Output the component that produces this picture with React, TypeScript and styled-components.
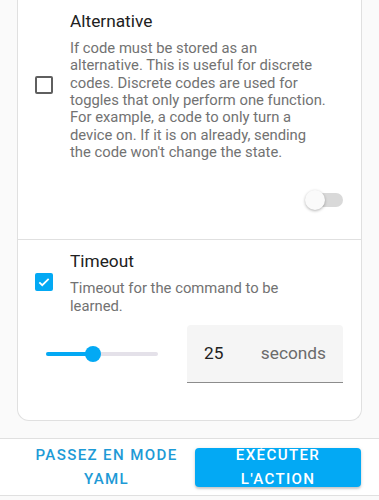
import styled, { createGlobalStyle } from 'styled-components';

const GlobalStyle = createGlobalStyle`
  html, body {
    margin: 0;
    padding: 0;
    background: #fafafa;
    font-family: Roboto, "Noto Sans", "Liberation Sans", sans-serif;
  }
`;

const Page = styled.div`
  width: 379px;
  height: 500px;
  display: flex;
  flex-direction: column;
  overflow: hidden;
`;

const Card = styled.div`
  margin: 0 17px;
  background: #fff;
  border: 1px solid #e0e0e0;
  border-top: none;
  border-radius: 0 0 12px 12px;
`;

const Section = styled.div<{ $last?: boolean }>`
  padding: 9px 18px ${(p) => (p.$last ? '37px' : '29px')} 17px;
  border-bottom: ${(p) => (p.$last ? 'none' : '1px solid #e0e0e0')};
`;

const Row = styled.div`
  display: flex;
  align-items: center;
  gap: 17px;
`;

const Box = styled.div<{ $checked?: boolean }>`
  flex: 0 0 auto;
  width: 18px;
  height: 18px;
  box-sizing: border-box;
  border-radius: 2px;
  border: 2px solid ${(p) => (p.$checked ? '#03a9f4' : '#5f5f5f')};
  background: ${(p) => (p.$checked ? '#03a9f4' : 'transparent')};
  display: flex;
  align-items: center;
  justify-content: center;
`;

const Text = styled.div`
  display: flex;
  flex-direction: column;
  gap: 7px;
  width: 260px;
`;

const Title = styled.div`
  font-size: 17.3px;
  line-height: 24px;
  color: #212121;
`;

const Desc = styled.div`
  font-size: 14.8px;
  line-height: 17.33px;
  color: #727272;
`;

const ToggleRow = styled.div`
  display: flex;
  justify-content: flex-end;
  margin-top: 29px;
  height: 20px;
`;

const Toggle = styled.div`
  position: relative;
  width: 38px;
  height: 20px;
  display: flex;
  align-items: center;
  justify-content: flex-end;
`;

const Track = styled.div`
  width: 34px;
  height: 14px;
  border-radius: 7px;
  background: #d9d9d9;
`;

const Thumb = styled.div`
  position: absolute;
  left: 0;
  top: 0;
  width: 20px;
  height: 20px;
  border-radius: 50%;
  background: #fafafa;
  box-shadow: 0 1px 3px rgba(0, 0, 0, 0.3);
`;

const SliderRow = styled.div`
  display: flex;
  align-items: center;
  gap: 29px;
  margin-top: 10px;
  padding-left: 11px;
`;

const Slider = styled.div`
  position: relative;
  width: 112px;
  height: 16px;
  display: flex;
  align-items: center;
`;

const Rail = styled.div`
  width: 100%;
  height: 4px;
  border-radius: 2px;
  background: #e4e1e9;
  overflow: hidden;
`;

const Fill = styled.div`
  height: 100%;
  background: #03a9f4;
`;

const Knob = styled.div`
  position: absolute;
  top: 0;
  width: 16px;
  height: 16px;
  margin-left: -8px;
  border-radius: 50%;
  background: #03a9f4;
`;

const Field = styled.div`
  width: 156px;
  height: 58px;
  box-sizing: border-box;
  background: #f5f5f5;
  border-bottom: 1px solid #8c8c8c;
  border-radius: 4px 4px 0 0;
  display: flex;
  align-items: center;
  justify-content: space-between;
  padding: 0 17px;
  font-size: 17.3px;
`;

const Value = styled.span`
  color: #212121;
`;

const Suffix = styled.span`
  color: #6b6b6b;
`;

const Footer = styled.div`
  margin-top: 17px;
  background: #fff;
  border-top: 1px solid #e0e0e0;
  border-bottom: 1px solid #e0e0e0;
  padding: 9px 18px 8px 26px;
  display: flex;
  align-items: center;
  gap: 8px;
`;

const Button = styled.button<{ $primary?: boolean }>`
  font-family: Roboto, "Noto Sans", "Liberation Sans", sans-serif;
  font-size: 15.1px;
  font-weight: 500;
  letter-spacing: 1.35px;
  line-height: 24px;
  text-transform: uppercase;
  border: none;
  padding: 0 6px;
  height: 39px;
  border-radius: 4px;
  display: flex;
  align-items: center;
  justify-content: center;
  text-align: center;
  overflow: visible;
  cursor: pointer;
  width: ${(p) => (p.$primary ? '166px' : '161px')};
  color: ${(p) => (p.$primary ? '#fff' : '#1e9ad6')};
  background: ${(p) => (p.$primary ? '#03a9f4' : 'transparent')};
  box-shadow: ${(p) =>
    p.$primary ? '0 2px 2px rgba(0,0,0,0.14), 0 1px 4px rgba(0,0,0,0.12)' : 'none'};
`;

const Check = () => (
  <svg width="14" height="14" viewBox="0 0 24 24">
    <path d="M4 12.5l5 5L20 6.5" fill="none" stroke="#fff" strokeWidth="3" />
  </svg>
);

const App = () => {
  const value = 25;
  const max = 60;
  const pct = (value / max) * 100;
  return (
    <>
      <GlobalStyle />
      <Page>
        <Card>
          <Section>
            <Row>
              <Box />
              <Text>
                <Title>Alternative</Title>
                <Desc>
                  If code must be stored as an alternative. This is useful for discrete codes.
                  Discrete codes are used for toggles that only perform one function. For example,
                  a code to only turn a device on. If it is on already, sending the code won't
                  change the state.
                </Desc>
              </Text>
            </Row>
            <ToggleRow>
              <Toggle>
                <Track />
                <Thumb />
              </Toggle>
            </ToggleRow>
          </Section>
          <Section $last>
            <Row>
              <Box $checked>
                <Check />
              </Box>
              <Text>
                <Title>Timeout</Title>
                <Desc>Timeout for the command to be learned.</Desc>
              </Text>
            </Row>
            <SliderRow>
              <Slider>
                <Rail>
                  <Fill style={{ width: `${pct}%` }} />
                </Rail>
                <Knob style={{ left: `${pct}%` }} />
              </Slider>
              <Field>
                <Value>{value}</Value>
                <Suffix>seconds</Suffix>
              </Field>
            </SliderRow>
          </Section>
        </Card>
        <Footer>
          <Button>Passez en mode YAML</Button>
          <Button $primary>Exécuter l'action</Button>
        </Footer>
      </Page>
    </>
  );
};

export default App;
